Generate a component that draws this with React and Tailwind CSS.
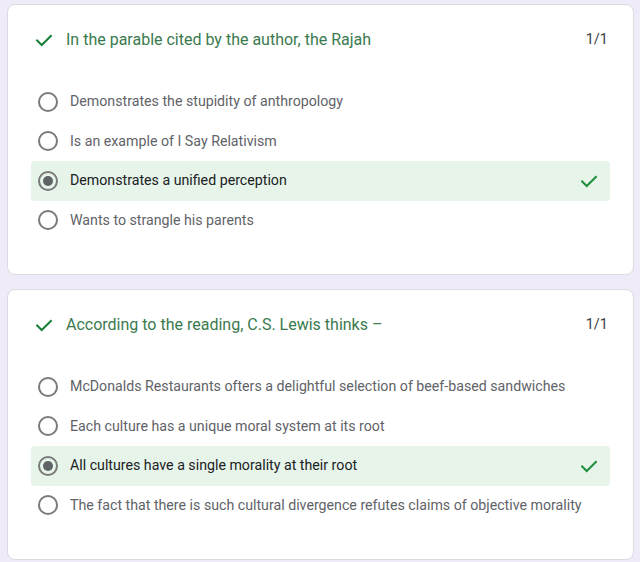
import React from "react";

const Check = ({ className }) => (
  <svg viewBox="0 0 24 24" className={className} fill="none" stroke="currentColor" strokeWidth="2.2" strokeLinecap="square">
    <path d="M4.5 12.5l5 5L19.5 7.5" />
  </svg>
);

const Radio = ({ selected }) => (
  <div className="w-[20px] h-[20px] rounded-full border-2 border-[#7a7a7a] flex items-center justify-center shrink-0">
    {selected && <div className="w-[10px] h-[10px] rounded-full bg-[#5f6368]" />}
  </div>
);

const Option = ({ text, selected }) => (
  <div
    className={
      "h-[39.5px] flex items-center pl-[7px] pr-[10px] rounded-[4px] " +
      (selected ? "bg-[#e6f4ea]" : "")
    }
  >
    <Radio selected={selected} />
    <span className={"ml-[12px] text-[14.2px] flex-1 " + (selected ? "text-[#202124]" : "text-[#5f6368]")}>
      {text}
    </span>
    {selected && <Check className="w-[22px] h-[22px] text-[#1e8e3e]" />}
  </div>
);

const Card = ({ title, options }) => (
  <div className="w-[627px] bg-white rounded-[8px] border border-[#dadce0] pt-[23px] pb-[34px]">
    <div className="h-[24px] flex items-center pl-[25px] pr-[25px]">
      <Check className="w-[22px] h-[22px] text-[#188038]" />
      <span className="ml-[11px] text-[16px] text-[#3a7a4e] flex-1">{title}</span>
      <span className="text-[14.5px] text-[#3c4043]">1/1</span>
    </div>
    <div className="mt-[30px] mx-[23px] flex flex-col">
      {options.map((o, i) => (
        <Option key={i} text={o.t} selected={o.s} />
      ))}
    </div>
  </div>
);

export default function App() {
  return (
    <div
      className="w-[640px] h-[562px] bg-[#f0ebf8] pt-[4px] pl-[7px] flex flex-col gap-[14px] overflow-hidden"
      style={{ fontFamily: "Roboto, 'Liberation Sans', sans-serif" }}
    >
      <Card
        title="In the parable cited by the author, the Rajah"
        options={[
          { t: "Demonstrates the stupidity of anthropology" },
          { t: "Is an example of I Say Relativism" },
          { t: "Demonstrates a unified perception", s: true },
          { t: "Wants to strangle his parents" },
        ]}
      />
      <Card
        title="According to the reading, C.S. Lewis thinks –"
        options={[
          { t: "McDonalds Restaurants ofters a delightful selection of beef-based sandwiches" },
          { t: "Each culture has a unique moral system at its root" },
          { t: "All cultures have a single morality at their root", s: true },
          { t: "The fact that there is such cultural divergence refutes claims of objective morality" },
        ]}
      />
    </div>
  );
}
